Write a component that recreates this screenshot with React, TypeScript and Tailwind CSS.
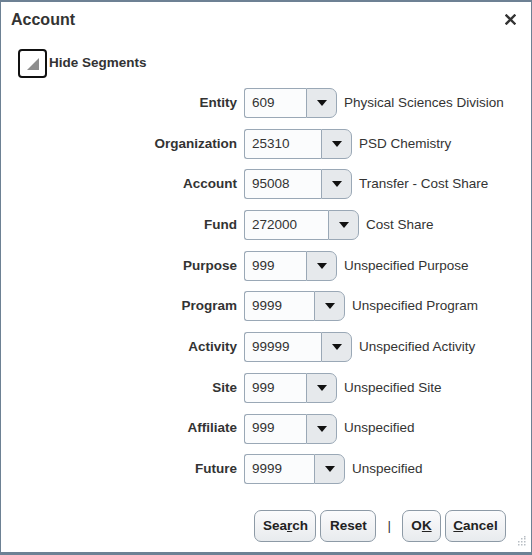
import React from "react";

const SEGMENTS = [
  { label: "Entity", code: "609", w: "w-[62px]", desc: "Physical Sciences Division" },
  { label: "Organization", code: "25310", w: "w-[77px]", desc: "PSD Chemistry" },
  { label: "Account", code: "95008", w: "w-[77px]", desc: "Transfer - Cost Share" },
  { label: "Fund", code: "272000", w: "w-[84px]", desc: "Cost Share" },
  { label: "Purpose", code: "999", w: "w-[62px]", desc: "Unspecified Purpose" },
  { label: "Program", code: "9999", w: "w-[70px]", desc: "Unspecified Program" },
  { label: "Activity", code: "99999", w: "w-[77px]", desc: "Unspecified Activity" },
  { label: "Site", code: "999", w: "w-[62px]", desc: "Unspecified Site" },
  { label: "Affiliate", code: "999", w: "w-[62px]", desc: "Unspecified" },
  { label: "Future", code: "9999", w: "w-[70px]", desc: "Unspecified" },
];

function ActionButton({ w, children }: { w: string; children: React.ReactNode }) {
  return (
    <button
      className={`${w} h-[32px] rounded-[7px] border border-[#8d9aa6] bg-gradient-to-b from-[#fbfbfc] to-[#e8ebee] text-[13.5px] font-bold text-[#222]`}
    >
      {children}
    </button>
  );
}

export default function App() {
  return (
    <div
      className="w-[532px] h-[555px] bg-white border-x border-t-2 border-b-[3px] border-[#6d8194] flex flex-col text-[#333] relative"
      style={{ fontFamily: '"Liberation Sans", Arial, sans-serif' }}
    >
      {/* Title */}
      <div className="flex items-center justify-between pl-[10px] pr-[15px] pt-[3px] h-[32px]">
        <span className="text-[16px] font-bold text-[#333]">Account</span>
        <svg width="11" height="11" viewBox="0 0 11 11">
          <path d="M1.5 1.5 L9.5 9.5 M9.5 1.5 L1.5 9.5" stroke="#333" strokeWidth="2.4" strokeLinecap="square" />
        </svg>
      </div>

      {/* Hide Segments */}
      <div className="flex items-center pl-[17px] mt-[15px] gap-[2px]">
        <div className="w-[29px] h-[29px] border-2 border-[#111] rounded-[4px] flex items-end justify-end p-[6px]">
          <svg width="12" height="12" viewBox="0 0 12 12">
            <path d="M12 0 L12 12 L0 12 Z" fill="#8e8e8e" />
          </svg>
        </div>
        <span className="text-[13.5px] font-bold text-[#333]">Hide Segments</span>
      </div>

      {/* Segments */}
      <div className="flex flex-col gap-y-[10.7px] mt-[10px]">
        {SEGMENTS.map((s) => (
          <div key={s.label} className="flex items-center h-[30px]">
            <span className="w-[236px] text-right text-[13.5px] font-bold text-[#333]">{s.label}</span>
            <div className="flex ml-[7px] h-[30px]">
              <div
                className={`${s.w} h-full bg-[#fbfcfd] border border-r-0 border-[#9aa8b6] rounded-l-[3px] flex items-center pl-[7px] text-[13.5px] text-[#333]`}
              >
                {s.code}
              </div>
              <div className="w-[31px] h-full bg-[#e6e9ec] border border-[#9aa8b6] rounded-r-[7px] flex items-center justify-center">
                <svg width="10" height="8" viewBox="0 0 10 8">
                  <path d="M0 1 L10 1 L5 7 Z" fill="#111" />
                </svg>
              </div>
            </div>
            <span className="ml-[7px] text-[13.5px] text-[#333]">{s.desc}</span>
          </div>
        ))}
      </div>

      {/* Footer */}
      <div className="flex items-center justify-end gap-[4px] mt-auto mb-[10px] pr-[25px]">
        <ActionButton w="w-[62px]">
          Sea<span className="underline">r</span>ch
        </ActionButton>
        <ActionButton w="w-[56px]">Reset</ActionButton>
        <span className="mx-[7px] text-[13.5px] text-[#333]">|</span>
        <ActionButton w="w-[39px]">
          O<span className="underline">K</span>
        </ActionButton>
        <ActionButton w="w-[61px]">
          <span className="underline">C</span>ancel
        </ActionButton>
      </div>

      {/* Resize grip */}
      <svg className="absolute right-[5px] bottom-[6px]" width="10" height="10" viewBox="0 0 10 10">
        {[
          [8, 0], [8, 3], [5, 3], [8, 6], [5, 6], [2, 6], [8, 9], [5, 9], [2, 9],
        ].map(([x, y], i) => (
          <rect key={i} x={x} y={y - 1 < 0 ? 0 : y - 1} width="1.5" height="1.5" fill="#b8bec4" />
        ))}
      </svg>
    </div>
  );
}
